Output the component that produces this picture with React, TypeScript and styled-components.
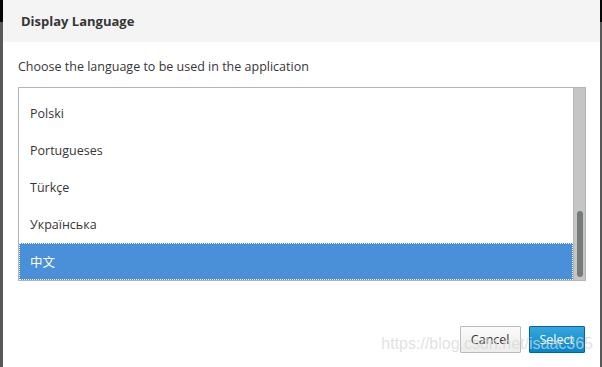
import styled, { createGlobalStyle } from "styled-components";

// list is scrolled to the end, only the last rows are visible
const languages = ["Polski", "Portugueses", "Türkçe", "Українська", "中文"];

function App() {
  const selected = "中文";

  return (
    <>
      <GlobalStyle />
      <Screen>
        <Backdrop />
        <Dialog>
          <Header>Display Language</Header>
          <Body>
            <Hint>Choose the language to be used in the application</Hint>
            <ListBox>
              <Options>
                {languages.map((lang) => (
                  <Option key={lang} $active={lang === selected}>
                    {lang}
                  </Option>
                ))}
              </Options>
              <Track>
                <Thumb />
              </Track>
            </ListBox>
          </Body>
          <Footer>
            <Button>Cancel</Button>
            <Button $primary>Select</Button>
          </Footer>
        </Dialog>
        <Backdrop $narrow />
        <Watermark>https://blog.csdn.net/isaac365</Watermark>
      </Screen>
    </>
  );
}

export default App;

const GlobalStyle = createGlobalStyle`
  html, body {
    margin: 0;
    padding: 0;
    background: #5a5a5a;
  }
  body {
    font-family: "Open Sans", "Noto Sans CJK SC", sans-serif;
  }
`;

const Screen = styled.div`
  position: relative;
  display: flex;
  flex-direction: row;
  width: 602px;
  height: 367px;
  overflow: hidden;
`;

const Backdrop = styled.div<{ $narrow?: boolean }>`
  width: ${(p) => (p.$narrow ? "2px" : "3px")};
  flex-shrink: 0;
  background: linear-gradient(#050505 0, #050505 22px, #585858 22px);
`;

const Dialog = styled.div`
  flex: 1;
  display: flex;
  flex-direction: column;
  background: #fff;
`;

const Header = styled.div`
  height: 42px;
  display: flex;
  align-items: center;
  padding-left: 18px;
  background: #f4f4f4;
  color: #363636;
  font-size: 13px;
  font-weight: 700;
`;

const Body = styled.div`
  display: flex;
  flex-direction: column;
  padding: 16px 14px 0 15px;
`;

const Hint = styled.p`
  margin: 0 0 11px;
  line-height: 18px;
  font-size: 12.5px;
  color: #363636;
`;

const ListBox = styled.div`
  display: flex;
  flex-direction: row;
  height: 194px;
  box-sizing: border-box;
  border: 1px solid #b4b4b4;
  border-right: none;
`;

const Options = styled.div`
  flex: 1;
  display: flex;
  flex-direction: column;
  justify-content: flex-end;
  overflow: hidden;
`;

const Option = styled.div<{ $active?: boolean }>`
  height: 37px;
  flex-shrink: 0;
  box-sizing: border-box;
  display: flex;
  align-items: center;
  padding: 0 0 1px 11px;
  font-size: 12.5px;
  color: ${(p) => (p.$active ? "#fff" : "#363636")};
  background: ${(p) => (p.$active ? "#4a90d9" : "transparent")};
  outline: ${(p) => (p.$active ? "1px dotted #fff" : "none")};
  outline-offset: -1px;
`;

const Track = styled.div`
  width: 13px;
  display: flex;
  flex-direction: column;
  justify-content: flex-end;
  align-items: center;
  padding-bottom: 3px;
  box-sizing: border-box;
  background: #c5c5c5;
  border-left: 1px solid #b4b4b4;
  border-right: 1px solid #b4b4b4;
`;

const Thumb = styled.div`
  width: 6px;
  height: 66px;
  border-radius: 3px;
  background: #777a7b;
`;

const Footer = styled.div`
  display: flex;
  justify-content: flex-end;
  gap: 8px;
  padding: 45px 15px 0 0;
`;

const Button = styled.button<{ $primary?: boolean }>`
  height: 27px;
  padding: 0 10px;
  font-family: "Open Sans", sans-serif;
  font-size: 12.5px;
  border-radius: 1px;
  border: 1px solid ${(p) => (p.$primary ? "#00659c" : "#bbbbbb")};
  color: ${(p) => (p.$primary ? "#fff" : "#363636")};
  background: ${(p) =>
    p.$primary
      ? "linear-gradient(#39a5dc, #0088ce)"
      : "linear-gradient(#fafafa, #ededed)"};
`;

const Watermark = styled.div`
  position: absolute;
  right: 9px;
  bottom: 14px;
  font-family: "Liberation Sans", Arial, sans-serif;
  font-size: 16px;
  color: rgba(215, 215, 215, 0.75);
  pointer-events: none;
`;
